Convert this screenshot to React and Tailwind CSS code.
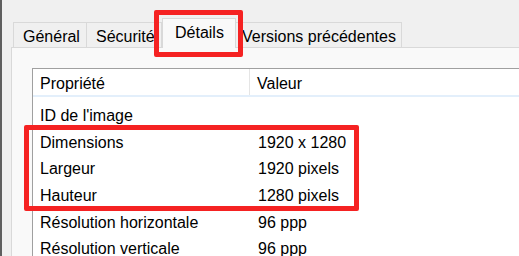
import React from "react";

const rows = [
  ["ID de l'image", ""],
  ["Dimensions", "1920 x 1280"],
  ["Largeur", "1920 pixels"],
  ["Hauteur", "1280 pixels"],
  ["Résolution horizontale", "96 ppp"],
  ["Résolution verticale", "96 ppp"],
];

export default function App() {
  return (
    <div className="relative w-[519px] h-[256px] overflow-hidden bg-[#f0f0f0] flex font-['Liberation_Sans',Arial,sans-serif] text-[16px] text-black">
      <div className="w-[2px] shrink-0 bg-[#5f5f5f]" />
      <div className="flex-1 flex flex-col pt-[18px] pl-[9px]">
        {/* Tabs */}
        <div className="h-[29px] flex items-end pl-[2px] shrink-0">
          <div className="h-[25px] w-[74px] border border-b-0 border-[#d9d9d9] bg-[#f0f0f0] pl-[9px] pt-[3px] flex items-center">
            Général
          </div>
          <div className="h-[25px] w-[75px] border border-b-0 border-l-0 border-[#d9d9d9] bg-[#f0f0f0] pl-[9px] pt-[3px] flex items-center">
            Sécurité
          </div>
          <div className="relative z-10 h-[30px] mb-[-1px] w-[74px] border border-b-0 border-[#d9d9d9] bg-[#f9f9f9] pl-[12px] pb-[1px] flex items-center">
            Détails
          </div>
          <div className="h-[25px] w-[166px] border border-b-0 border-l-0 border-[#d9d9d9] bg-[#f0f0f0] pl-[6px] pt-[3px] flex items-center">
            Versions précédentes
          </div>
        </div>
        {/* Panel */}
        <div className="flex-1 bg-[#f9f9f9] border-t border-l border-[#d9d9d9] pt-[20px] pl-[20px]">
          <div className="h-full bg-white border-t border-l border-[#a0a0a0]">
            <div className="h-[26px] flex">
              <div className="w-[217px] pl-[7px] pt-[3px] flex items-center border-r border-[#e5e5e5]">Propriété</div>
              <div className="pl-[7px] pt-[3px] flex items-center">Valeur</div>
            </div>
            <div className="h-[2px] bg-[#e3effb]" />
            <div className="pt-[6px]">
              {rows.map(([k, v]) => (
                <div key={k} className="h-[26.6px] flex">
                  <div className="w-[217px] pl-[7px] flex items-center">{k}</div>
                  <div className="pl-[8px] flex items-center">{v}</div>
                </div>
              ))}
            </div>
          </div>
        </div>
      </div>
      {/* Annotation boxes */}
      <div className="absolute left-[154px] top-[10px] w-[89px] h-[47px] border-[5px] border-[#f52222] rounded-[2px]" />
      <div className="absolute left-[24px] top-[125px] w-[335px] h-[86px] border-[5px] border-[#f52222] rounded-[2px]" />
    </div>
  );
}
